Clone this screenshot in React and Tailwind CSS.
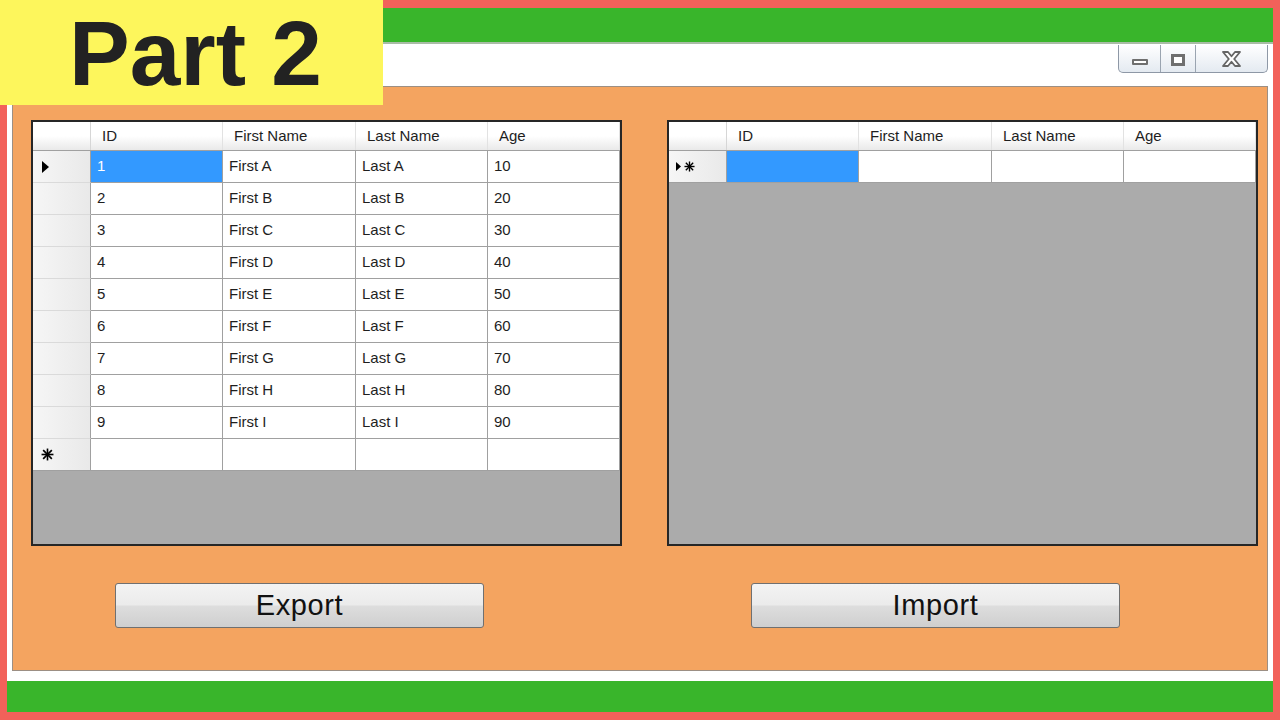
import React from 'react';

const COLS = [
  { key: 'id', label: 'ID', w: 'w-[132px]' },
  { key: 'first', label: 'First Name', w: 'w-[133px]' },
  { key: 'last', label: 'Last Name', w: 'w-[132px]' },
  { key: 'age', label: 'Age', w: 'w-[132px]' },
];

const people = 'ABCDEFGHI'.split('').map((l, i) => ({
  id: String(i + 1),
  first: `First ${l}`,
  last: `Last ${l}`,
  age: String((i + 1) * 10),
}));

function Arrow({ small }) {
  return small ? (
    <svg width="5" height="9" viewBox="0 0 5 9"><polygon points="0,0 5,4.5 0,9" fill="#000" /></svg>
  ) : (
    <svg width="7" height="12" viewBox="0 0 7 12"><polygon points="0,0 7,6 0,12" fill="#000" /></svg>
  );
}

function Star({ size = 13 }) {
  return (
    <svg width={size} height={size} viewBox="0 0 12 12" stroke="#000" strokeWidth="1.5">
      <line x1="6" y1="0.5" x2="6" y2="11.5" />
      <line x1="0.5" y1="6" x2="11.5" y2="6" />
      <line x1="2" y1="2" x2="10" y2="10" />
      <line x1="10" y1="2" x2="2" y2="10" />
    </svg>
  );
}

function DataGrid({ rows, newRowMark, newRowSelected }) {
  return (
    <div className="w-[591px] h-[426px] border-2 border-[#262626] bg-[#ababab] flex flex-col">
      {/* column headers */}
      <div className="flex h-[29px] shrink-0 bg-gradient-to-b from-white via-white to-[#e9e9e9] border-b border-[#a0a0a0]">
        <div className="w-[58px] border-r border-[#d6d6d6]" />
        {COLS.map((c) => (
          <div key={c.key} className={`${c.w} pl-[11px] flex items-center border-r border-[#e2e2e2] text-[15px] text-[#1e1e1e]`}>
            {c.label}
          </div>
        ))}
      </div>

      {rows.map((r, i) => (
        <div key={r.id} className="flex h-[32px] shrink-0">
          <div className="w-[58px] pl-[9px] flex items-center bg-gradient-to-r from-[#f6f6f6] to-[#e9e9e9] border-r border-b border-r-[#a0a0a0] border-b-[#dadada]">
            {i === 0 && <Arrow />}
          </div>
          {COLS.map((c, j) => {
            const sel = i === 0 && j === 0;
            return (
              <div
                key={c.key}
                className={`${c.w} pl-[6px] flex items-center border-r border-b border-[#a0a0a0] text-[15px] ${sel ? 'bg-[#3399ff] text-white' : 'bg-white text-[#1e1e1e]'}`}
              >
                {r[c.key]}
              </div>
            );
          })}
        </div>
      ))}

      {/* new row */}
      <div className="flex h-[32px] shrink-0">
        <div className="w-[58px] pl-[7px] flex items-center gap-[3px] bg-gradient-to-r from-[#f6f6f6] to-[#e9e9e9] border-r border-b border-[#a0a0a0]">
          {newRowMark === 'both' ? (
            <>
              <Arrow small />
              <Star size={11} />
            </>
          ) : (
            <span className="pl-[1px] flex"><Star /></span>
          )}
        </div>
        {COLS.map((c, j) => (
          <div
            key={c.key}
            className={`${c.w} border-r border-b border-[#a0a0a0] ${newRowSelected && j === 0 ? 'bg-[#3399ff]' : 'bg-white'}`}
          />
        ))}
      </div>
    </div>
  );
}

function WinButton({ children }) {
  return (
    <button className="w-[369px] h-[45px] rounded-[3px] border border-[#707070] bg-[linear-gradient(to_bottom,#f3f3f3_0%,#ebebeb_48%,#dddddd_52%,#cfcfcf_100%)] text-[29px] tracking-[0.6px] text-[#111] flex items-center justify-center">
      {children}
    </button>
  );
}

export default function App() {
  return (
    <div
      className="relative w-[1280px] h-[720px] overflow-hidden bg-[#f2615a] px-[7px] py-[8px] flex flex-col"
      style={{ fontFamily: '"Liberation Sans", Arial, sans-serif' }}
    >
      <div className="h-[34px] shrink-0 bg-[#39b52b]" />

      {/* form window */}
      <div className="flex-1 flex flex-col bg-white border-t-2 border-[#a9bca6] px-[5px] pb-[10px]">
        <div className="h-[42px] shrink-0 flex justify-end">
          <div className="flex h-[28px] mt-px rounded-b-[5px] border border-t-0 border-[#8e98a6] bg-gradient-to-b from-white to-[#e4eaf1] overflow-hidden">
            <div className="w-[42px] flex items-end justify-center pb-[7px] border-r border-[#9aa4b0]">
              <div className="w-[16px] h-[6px] rounded-[1px] border-2 border-[#6f6f6f] bg-white" />
            </div>
            <div className="w-[35px] flex items-center justify-center pt-[2px] border-r border-[#9aa4b0]">
              <div className="w-[14px] h-[12px] border-[3px] border-[#6f6f6f] bg-white" />
            </div>
            <div className="w-[71px] flex items-center justify-center">
              <svg width="19" height="16" viewBox="0 0 19 16">
                <path
                  d="M1 1 H6 L9.5 5.3 L13 1 H18 L12.2 8 L18 15 H13 L9.5 10.7 L6 15 H1 L6.8 8 Z"
                  fill="#fff"
                  stroke="#666"
                  strokeWidth="1.8"
                  strokeLinejoin="round"
                />
              </svg>
            </div>
          </div>
        </div>

        <div className="flex-1 flex gap-[45px] bg-[#f4a460] border border-[#9c8f84] pl-[18px] pt-[33px]">
          <div className="flex flex-col">
            <DataGrid rows={people} newRowMark="star" />
            <div className="mt-[37px] ml-[84px]">
              <WinButton>Export</WinButton>
            </div>
          </div>
          <div className="flex flex-col">
            <DataGrid rows={[]} newRowMark="both" newRowSelected />
            <div className="mt-[37px] ml-[84px]">
              <WinButton>Import</WinButton>
            </div>
          </div>
        </div>
      </div>

      <div className="h-[31px] shrink-0 bg-[#39b52b]" />

      {/* title badge */}
      <div className="absolute top-0 left-0 w-[383px] h-[105px] bg-[#fdf65c] flex items-center pl-[69px] pt-[2px]">
        <span className="text-[91px] font-bold leading-none text-[#222]">Part 2</span>
      </div>
    </div>
  );
}
